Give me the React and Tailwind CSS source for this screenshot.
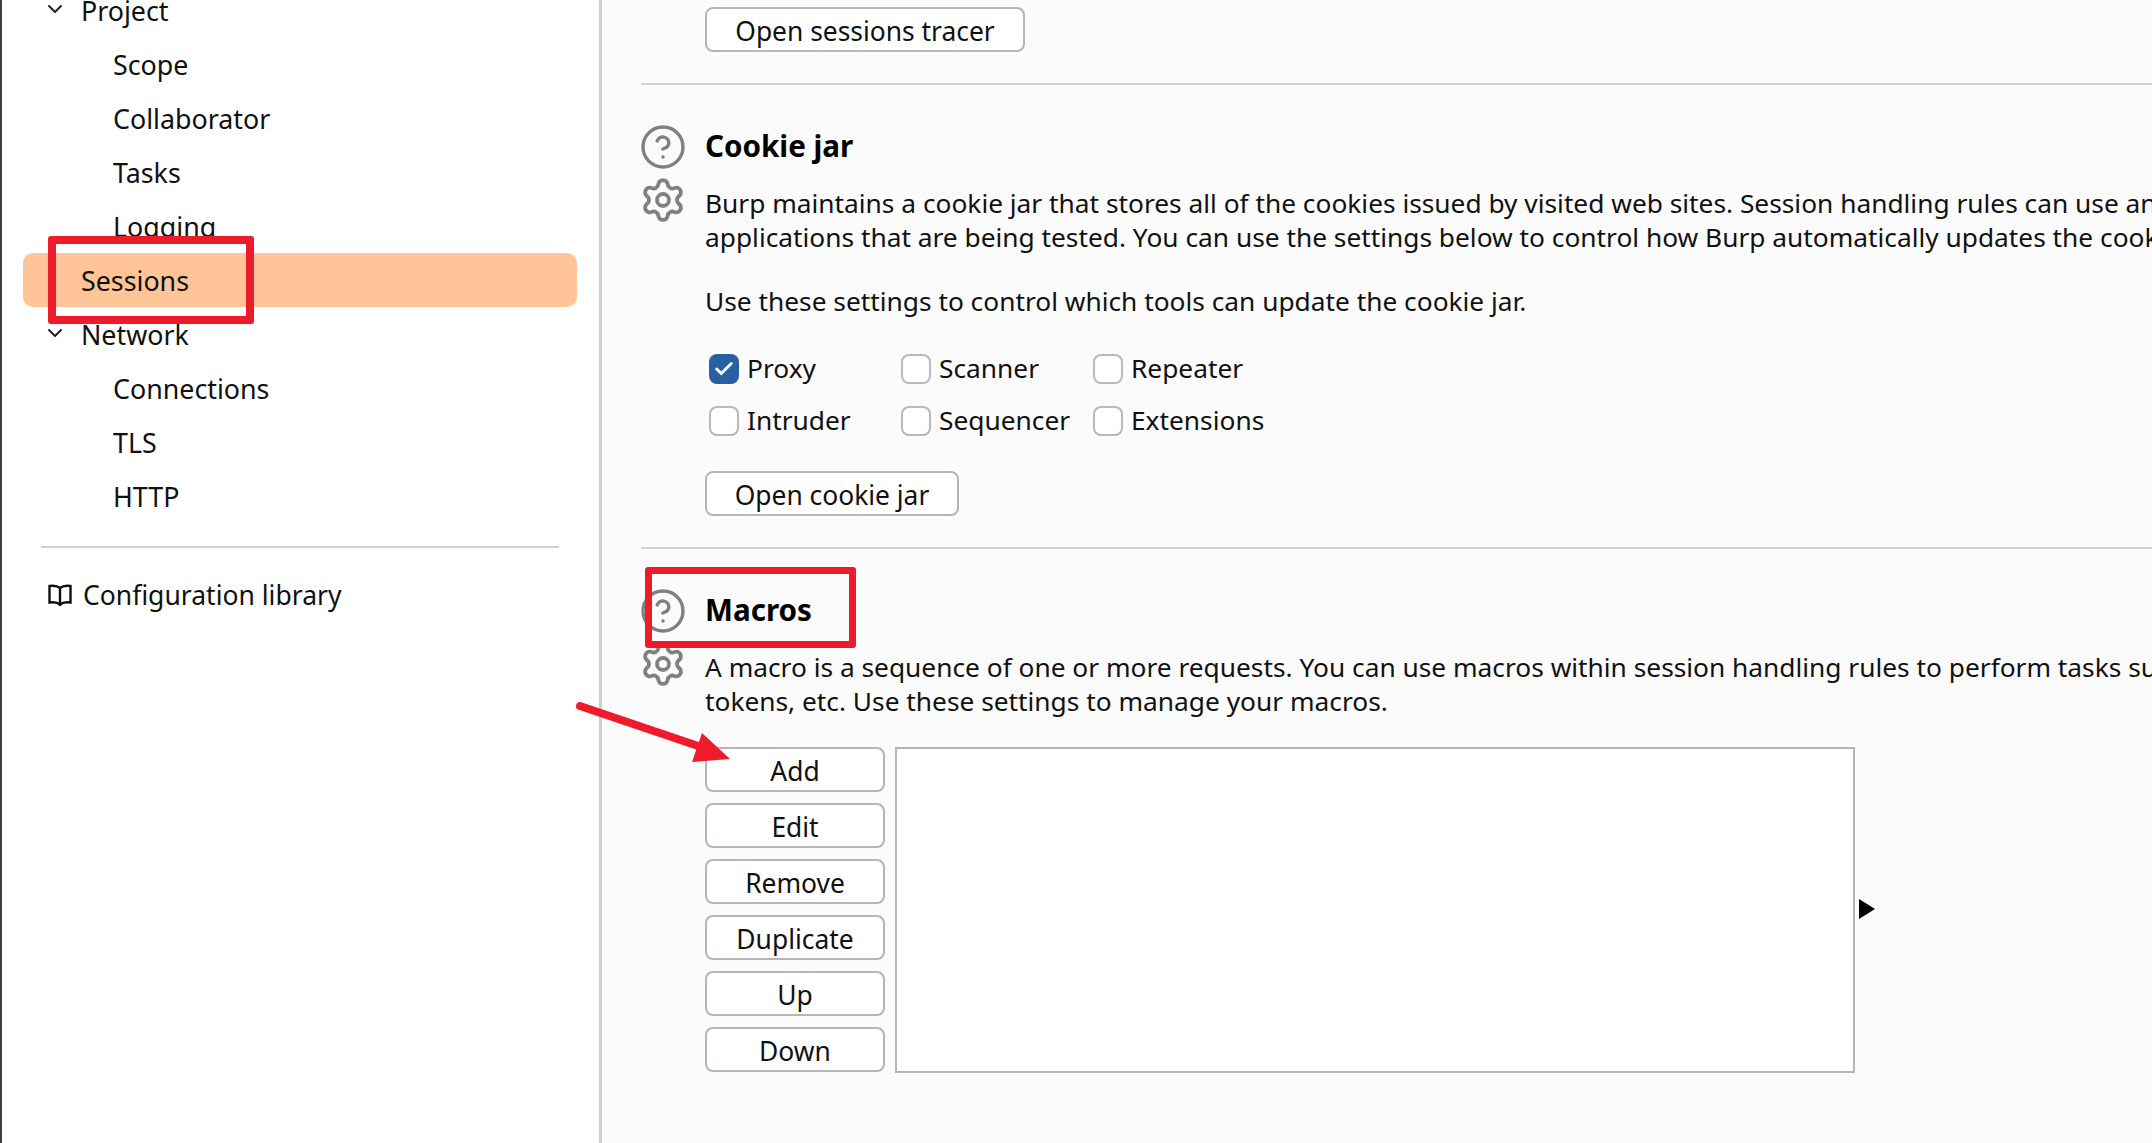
import React from 'react';
import { CircleHelp, Settings, ChevronDown, Check } from 'lucide-react';

function NavHead({ children }) {
  return (
    <div className="h-[54px] flex items-center pl-[43px]">
      <ChevronDown className="w-[24px] h-[24px] text-[#222] mr-[14px] -mt-[3px]" strokeWidth={2} />
      <span className="pt-[2px]">{children}</span>
    </div>
  );
}
function NavItem({ children }) {
  return <div className="h-[54px] flex items-center pl-[113px]"><span className="pt-[2px]">{children}</span></div>;
}

function Btn({ children, className = 'h-[45px]' }) {
  return (
    <button className={`block box-border pt-[3px] bg-white border-2 border-[#b8b4b6] rounded-[8px] text-center text-[#111] leading-none text-[26.4px] ${className}`}>
      {children}
    </button>
  );
}

function Check2({ label, checked }) {
  return (
    <label className="flex items-center w-[192px] h-[30px] shrink-0">
      <span className={`w-[30px] h-[30px] box-border rounded-[8px] flex items-center justify-center ${checked ? 'bg-[#27619f]' : 'bg-white border-2 border-[#b9b9b9]'}`}>
        {checked && <Check className="w-[22px] h-[22px] text-white" strokeWidth={3.2} />}
      </span>
      <span className="ml-[8px] whitespace-nowrap">{label}</span>
    </label>
  );
}

function Icons() {
  return (
    <div className="w-[65px] shrink-0 flex flex-col">
      <CircleHelp className="w-[48px] h-[48px] -mt-[4px] -ml-[2px] text-[#808080]" strokeWidth={1.7} />
      <Settings className="w-[48px] h-[48px] mt-[5px] -ml-[2px] text-[#808080]" strokeWidth={1.9} />
    </div>
  );
}

function Section({ title, children }) {
  return (
    <section className="flex pt-[42px] border-t-2 border-[#d2d2d2]">
      <Icons />
      <div className="flex-1 min-w-0">
        <h2 className="-ml-[1px] font-bold text-[29.6px] leading-[38px] text-black">{title}</h2>
        {children}
      </div>
    </section>
  );
}

export default function App() {
  return (
    <div className="relative h-screen w-full overflow-hidden flex bg-[#fbfbfb] text-[26.3px] text-[#111] [font-family:'Noto_Sans',sans-serif]">
      <aside className="w-[602px] shrink-0 bg-white border-l-2 border-l-[#3a3d4a] border-r-[3px] border-r-[#cfcfcf] box-border text-[26.8px]">
        <div className="-mt-[17px] -ml-[2px]">
          <NavHead>Project</NavHead>
          <NavItem>Scope</NavItem>
          <NavItem>Collaborator</NavItem>
          <NavItem>Tasks</NavItem>
          <NavItem>Logging</NavItem>
          <div className="h-[54px] ml-[23px] mr-[22px] pl-[58px] flex items-center bg-[#ffc599] rounded-[10px]"><span className="pt-[2px]">Sessions</span></div>
          <NavHead>Network</NavHead>
          <NavItem>Connections</NavItem>
          <NavItem>TLS</NavItem>
          <NavItem>HTTP</NavItem>
          <div className="h-[2px] bg-[#d0d0d0] ml-[41px] mr-[40px] mt-[23px]" />
          <div className="flex items-center pl-[48px] mt-[30px] h-[34px]">
            <svg width="24" height="24" viewBox="0 0 24 24" fill="none" stroke="#111" strokeWidth="2.4" className="mr-[11px]">
              <path d="M12 5 C9.5 2.8 5 2.5 1.5 3 V19.5 C5 19 9.5 19.2 12 21.5 C14.5 19.2 19 19 22.5 19.5 V3 C19 2.5 14.5 2.8 12 5 Z M12 5 V23" />
            </svg>
            <span className="text-[26.5px] pt-[2px]">Configuration library</span>
          </div>
        </div>
      </aside>

      <main className="flex-1 min-w-0 pl-[39px] overflow-hidden">
        <div className="pl-[64px] pt-[7px] pb-[31px]">
          <Btn className="w-[320px] h-[45px]">Open sessions tracer</Btn>
        </div>

        <Section title="Cookie jar">
          <div className="-ml-[1px] mt-[21px] leading-[34px] whitespace-nowrap">
            <p>Burp maintains a cookie jar that stores all of the cookies issued by visited web sites. Session handling rules can use and update these cookies to maintain valid sessions with</p>
            <p>applications that are being tested. You can use the settings below to control how Burp automatically updates the cookie jar based on traffic from particular tools.</p>
          </div>
          <p className="-ml-[1px] mt-[30px] leading-[34px] whitespace-nowrap">Use these settings to control which tools can update the cookie jar.</p>
          <div className="mt-[36px] pl-[3px] flex flex-col gap-[22px]">
            <div className="flex">
              <Check2 label="Proxy" checked />
              <Check2 label="Scanner" />
              <Check2 label="Repeater" />
            </div>
            <div className="flex">
              <Check2 label="Intruder" />
              <Check2 label="Sequencer" />
              <Check2 label="Extensions" />
            </div>
          </div>
          <div className="mt-[35px] mb-[31px] -ml-[1px]">
            <Btn className="w-[254px] h-[45px]">Open cookie jar</Btn>
          </div>
        </Section>

        <Section title="Macros">
          <div className="-ml-[1px] mt-[21px] leading-[34px] whitespace-nowrap">
            <p>A macro is a sequence of one or more requests. You can use macros within session handling rules to perform tasks such as logging in to applications, obtaining anti-CSRF</p>
            <p>tokens, etc. Use these settings to manage your macros.</p>
          </div>
          <div className="-ml-[1px] mt-[29px] flex items-start">
            <div className="w-[180px] flex flex-col gap-[11px] shrink-0">
              {['Add', 'Edit', 'Remove', 'Duplicate', 'Up', 'Down'].map((b) => (
                <Btn key={b} className="w-full h-[45px]">{b}</Btn>
              ))}
            </div>
            <div className="ml-[10px] w-[960px] h-[326px] box-border bg-white border-2 border-[#b8b4b6] shrink-0" />
            <svg width="16" height="20" viewBox="0 0 16 20" className="ml-[4px] mt-[152px] shrink-0">
              <path d="M0 0 L16 10 L0 20 Z" fill="#000" />
            </svg>
          </div>
        </Section>
      </main>

      <div className="absolute left-[48px] top-[236px] w-[206px] h-[88px] border-[8px] border-[#ee1c2b] rounded-[3px] pointer-events-none" />
      <div className="absolute left-[645px] top-[567px] w-[211px] h-[81px] border-[7px] border-[#ee1c2b] rounded-[3px] pointer-events-none" />
      <svg className="absolute left-[560px] top-[690px] pointer-events-none" width="190" height="90" viewBox="0 0 190 90">
        <path d="M20 16 L150 60" stroke="#ee1c2b" strokeWidth="8" strokeLinecap="round" />
        <path d="M142 43 L170 69 L132 72 Z" fill="#ee1c2b" />
      </svg>
    </div>
  );
}
